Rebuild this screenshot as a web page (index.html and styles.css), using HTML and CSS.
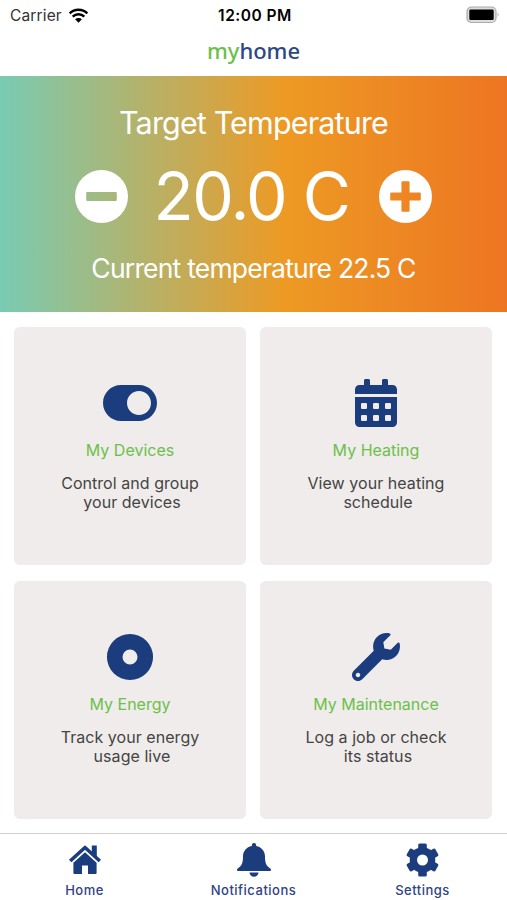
FILE: index.html
```
<!DOCTYPE html>
<html lang="en">
<head>
  <meta charset="UTF-8" />
  <meta name="viewport" content="width=device-width, initial-scale=1" />
  <title>myhome</title>
  <link rel="stylesheet" href="styles.css">
</head>
<body>
  <header class="status-bar">
    <div class="carrier">
      <span class="carrier-name">Carrier</span>
      <svg class="wifi" viewBox="0 0 20 15">
        <path d="M1.2 5.4a12.6 12.6 0 0 1 17.6 0M4.2 8.6a8.3 8.3 0 0 1 11.6 0" fill="none" stroke="#000" stroke-width="2.5" />
        <path d="M6.6 11.3a4.9 4.9 0 0 1 6.8 0L10 14.7z" />
      </svg>
    </div>
    <span class="clock">12:00 PM</span>
    <svg class="battery" viewBox="0 0 34 18">
      <rect x="1" y="1" width="29" height="15.5" rx="4.5" fill="#ddd" stroke="#aaa" stroke-width="1.2" />
      <rect x="3.3" y="3.6" width="24.4" height="10.4" rx="1.2" />
      <path d="M31.6 6.6q2 2 0 4.4z" fill="#aaa" />
    </svg>
  </header>
  <div class="logo"><span class="logo-my">my</span>home</div>

  <section class="hero">
    <h1 class="hero-title">Target Temperature</h1>
    <div class="hero-controls">
      <button class="round-btn" aria-label="Decrease">
        <svg viewBox="0 0 52 52"><path fill-rule="evenodd" d="M26 0a26 26 0 1 0 0 52a26 26 0 1 0 0-52zM12 21.5h28a1 1 0 0 1 1 1v7a1 1 0 0 1-1 1H12a1 1 0 0 1-1-1v-7a1 1 0 0 1 1-1z" /></svg>
      </button>
      <span class="target">20.0 C</span>
      <button class="round-btn" aria-label="Increase">
        <svg viewBox="0 0 52 52"><path fill-rule="evenodd" d="M26 0a26 26 0 1 0 0 52a26 26 0 1 0 0-52zM23 11h6a1 1 0 0 1 1 1v10h10a1 1 0 0 1 1 1v6a1 1 0 0 1-1 1H30v10a1 1 0 0 1-1 1h-6a1 1 0 0 1-1-1V30H12a1 1 0 0 1-1-1v-6a1 1 0 0 1 1-1h10V12a1 1 0 0 1 1-1z" /></svg>
      </button>
    </div>
    <p class="current">Current temperature 22.5 C</p>
  </section>

  <main class="cards">
    <a class="card">
      <svg class="card-icon" viewBox="0 0 576 512"><path d="M384 64H192C86 64 0 150 0 256s86 192 192 192h192c106 0 192-86 192-192S490 64 384 64zm0 320c-70.700 0-128-57.300-128-128s57.300-128 128-128 128 57.300 128 128-57.300 128-128 128z" /></svg>
      <h2 class="card-title">My Devices</h2>
      <p class="card-text">Control and group<br><span class="line2">your devices</span></p>
    </a>
    <a class="card">
      <svg class="card-icon" viewBox="0 0 448 512"><path fill-rule="evenodd" d="M0 464c0 26.500 21.500 48 48 48h352c26.500 0 48-21.500 48-48V192H0zM76 256h40q12 0 12 12v40q0 12-12 12H76q-12 0-12-12v-40q0-12 12-12zm128 0h40q12 0 12 12v40q0 12-12 12h-40q-12 0-12-12v-40q0-12 12-12zm128 0h40q12 0 12 12v40q0 12-12 12h-40q-12 0-12-12v-40q0-12 12-12zM76 384h40q12 0 12 12v40q0 12-12 12H76q-12 0-12-12v-40q0-12 12-12zm128 0h40q12 0 12 12v40q0 12-12 12h-40q-12 0-12-12v-40q0-12 12-12zm128 0h40q12 0 12 12v40q0 12-12 12h-40q-12 0-12-12v-40q0-12 12-12zM400 64h-48V16c0-8.800-7.200-16-16-16h-32c-8.800 0-16 7.200-16 16v48H160V16c0-8.800-7.200-16-16-16h-32c-8.800 0-16 7.200-16 16v48H48C21.500 64 0 85.500 0 112v48h448v-48c0-26.500-21.500-48-48-48z" /></svg>
      <h2 class="card-title">My Heating</h2>
      <p class="card-text">View your heating<br><span class="line2">schedule</span></p>
    </a>
    <a class="card">
      <svg class="card-icon" viewBox="0 0 512 512"><path fill-rule="evenodd" d="M256 10a246 246 0 1 0 0 492a246 246 0 1 0 0-492zm0 166a80 80 0 1 1 0 160a80 80 0 1 1 0-160z" /></svg>
      <h2 class="card-title">My Energy</h2>
      <p class="card-text">Track your energy<br><span class="line2">usage live</span></p>
    </a>
    <a class="card">
      <svg class="card-icon" viewBox="0 0 512 512"><path d="M507.730 109.100c-2.240-9.030-13.540-12.090-20.120-5.510l-74.360 74.360-67.880-11.310-11.310-67.880 74.360-74.360c6.620-6.620 3.430-17.900-5.660-20.160-47.380-11.740-99.550.910-136.580 37.930-39.640 39.640-50.550 97.100-34.050 147.200L18.740 402.760c-24.990 24.990-24.990 65.510 0 90.500 24.990 24.990 65.510 24.990 90.500 0l213.210-213.210c50.120 16.710 107.470 5.680 147.370-34.220 37.070-37.070 49.700-89.320 37.910-136.730zM64 472c-13.250 0-24-10.750-24-24 0-13.260 10.750-24 24-24s24 10.740 24 24c0 13.250-10.750 24-24 24z" /></svg>
      <h2 class="card-title">My Maintenance</h2>
      <p class="card-text">Log a job or check<br><span class="line2">its status</span></p>
    </a>
  </main>

  <nav class="tabs">
    <a class="tab">
      <svg class="tab-icon" viewBox="0 0 34 34">
        <path d="M2.200 18L17 4.500L31.800 18" fill="none" stroke="#1c3d7d" stroke-width="3.600" stroke-linejoin="round" />
        <path d="M23.800 2.500h5v12l-5-4.500zM17 9.200L28.600 19.800v10.200q0 1-1 1H20v-8.500h-6v8.500H6.400q-1 0-1-1V19.800z" />
      </svg>
      <span>Home</span>
    </a>
    <a class="tab">
      <svg class="tab-icon" viewBox="0 0 34 34">
        <path d="M17 0a2.200 2.200 0 0 1 2.200 2.200v.8c5.500 1.100 8.800 5.300 8.800 10.500 0 7 1.500 9.400 5.300 12 1.200.9.700 2.500-.6 2.500H1.300c-1.300 0-1.800-1.600-.6-2.500C4.500 22.900 6 20.500 6 13.500 6 8.300 9.300 4.100 14.800 3v-.8A2.200 2.200 0 0 1 17 0zM12.500 29.600h9a4.500 4.200 0 0 1-9 0z" />
      </svg>
      <span>Notifications</span>
    </a>
    <a class="tab">
      <svg class="tab-icon" viewBox="0 0 34 34">
        <g transform="translate(16.500 17)">
          <rect x="-4.300" y="-16.500" width="8.600" height="33" rx="1.500" />
          <rect x="-4.300" y="-16.500" width="8.600" height="33" rx="1.500" transform="rotate(60)" />
          <rect x="-4.300" y="-16.500" width="8.600" height="33" rx="1.500" transform="rotate(120)" />
          <circle r="12.800" />
          <circle r="5.500" fill="#fff" />
        </g>
      </svg>
      <span>Settings</span>
    </a>
  </nav>
</body>
</html>
```
FILE: styles.css
```
* { box-sizing: border-box; }
body {
  margin: 0;
  height: 900px;
  display: flex;
  flex-direction: column;
  overflow: hidden;
  background: #fff;
  font-family: Inter, "Liberation Sans", sans-serif;
}
h1, h2, p { margin: 0; font-weight: 400; }

.status-bar {
  height: 30px;
  padding: 0 7px 0 10px;
  display: grid;
  grid-template-columns: 1fr auto 1fr;
  align-items: center;
  font-size: 15.5px;
}
.carrier { display: flex; align-items: center; gap: 6px; color: #333; letter-spacing: 0.15px; }
.wifi { width: 21px; height: 15px; }
.clock { font-weight: 600; letter-spacing: 0.5px; }
.battery { width: 34px; height: 18px; justify-self: end; }

.logo {
  height: 46px;
  line-height: 41px;
  text-align: center;
  font-family: "Noto Sans", sans-serif;
  font-size: 22px;
  font-weight: 500;
  color: #2b4787;
}
.logo-my { color: #6cc04a; }

.hero {
  height: 236px;
  padding-top: 28px;
  display: flex;
  flex-direction: column;
  align-items: center;
  color: #fff;
  background: linear-gradient(90deg, #79cbb3 0%, #ed9a24 56%, #ed7522 100%);
}
.hero-title { font-size: 30.5px; line-height: 38px; letter-spacing: -0.85px; }
.hero-controls {
  height: 80px;
  margin-top: 14px;
  display: flex;
  align-items: center;
  justify-content: space-between;
  width: 357px;
}
.round-btn {
  width: 53px;
  height: 53px;
  padding: 0;
  border: none;
  background: none;
  cursor: pointer;
}
.round-btn svg { display: block; fill: #fff; }
.target {
  margin-right: 4px;
  font-size: 66px;
  line-height: 80px;
  letter-spacing: -1.7px;
}
.current { margin-top: 15px; font-size: 26.5px; line-height: 34px; letter-spacing: -0.8px; }

.cards {
  padding: 15px 15px 0 14px;
  display: grid;
  grid-template-columns: 1fr 1fr;
  grid-auto-rows: 238.4px;
  gap: 15.6px 14px;
}
.card {
  padding-top: 52px;
  display: flex;
  flex-direction: column;
  align-items: center;
  border-radius: 6px;
  background: #efeceb;
}
.card-icon { height: 48px; fill: #1c3d7d; }
.card-title {
  margin-top: 13px;
  font-size: 16px;
  line-height: 20px;
  color: #6cc04a;
}
.card-text {
  margin-top: 14px;
  font-size: 16px;
  line-height: 19px;
  letter-spacing: 0.05px;
  text-align: center;
  color: #444;
}
.line2 { margin-left: 4px; }

.tabs {
  height: 67px;
  margin-top: auto;
  padding-top: 9px;
  display: grid;
  grid-template-columns: repeat(3, 1fr);
  border-top: 1px solid #d0d0d0;
}
.tab {
  display: flex;
  flex-direction: column;
  align-items: center;
  font-size: 13px;
  font-weight: 500;
  line-height: 16px;
  letter-spacing: 0.5px;
  color: #2f4386;
}
.tab-icon { height: 34px; margin-bottom: 5px; fill: #1c3d7d; }
```
